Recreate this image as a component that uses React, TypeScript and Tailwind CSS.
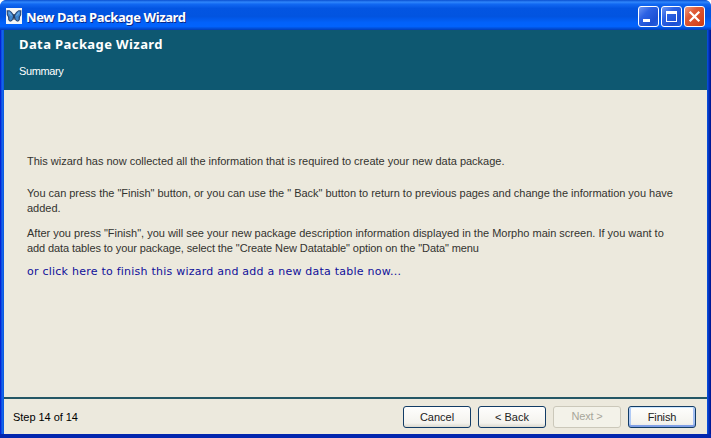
import React from 'react';

function Butterfly() {
  return (
    <svg width="16" height="16" viewBox="0 0 16 16" className="-mt-px block shrink-0">
      <rect width="16" height="16" fill="#f4f6f8" />
      <path d="M0.6 2.2L3.5 2.2Q6 3.6 7.6 6.4L8.4 6.4Q10 3.6 12.5 2.2L15.4 2.2L15.2 7L14 9L13.8 12L12 13.8L10 13L8 10L6 13L4 13.8L2.2 12L2 9L0.8 7Z" fill="#2b4876" />
      <path d="M1.8 3.2H3.6Q6 5 7.1 8L6.2 11.2L4.5 12.7L3.3 11.4L3.4 9L1.9 7Z" fill="#3f86cf" />
      <path d="M14.2 3.2H12.4Q10 5 8.9 8L9.8 11.2L11.5 12.7L12.7 11.4L12.6 9L14.1 7Z" fill="#3f86cf" />
      <path d="M2.8 4.5L5.6 7.7M13.2 4.5L10.4 7.7" stroke="#69a8e2" strokeWidth="1.2" />
      <path d="M8 6V12" stroke="#27344c" strokeWidth="1" />
    </svg>
  );
}

const captionBase =
  'flex h-[21px] w-[21px] items-center justify-center rounded-[3px] border border-white';

function TitleBar() {
  return (
    <div className="flex h-[30px] shrink-0 items-center rounded-tl-[6px] rounded-tr-[6px] bg-[linear-gradient(180deg,#0a4fd0_0%,#2f86fb_7%,#1168f2_14%,#0355e2_28%,#0254e0_55%,#0261fa_75%,#0263fd_88%,#0148cc_97%,#003dba_100%)] pt-[3px] pr-[6px] pl-[6px]">
      <Butterfly />
      <h1 className="ml-[4px] text-[13px] leading-[16px] font-bold tracking-[-0.41px] whitespace-nowrap text-white [font-family:'Noto_Sans','Liberation_Sans',sans-serif] [text-shadow:1px_1px_0_#0a2a88]">
        New Data Package Wizard
      </h1>
      <div className="ml-auto flex gap-[2px]">
        <button aria-label="Minimize" className={`${captionBase} bg-[linear-gradient(135deg,#6d96f3_0%,#2c62e4_35%,#1c50d4_75%,#2460df_100%)]`}>
          <svg width="19" height="19" viewBox="0 0 19 19"><rect x="4" y="12" width="7" height="3" fill="#fff" /></svg>
        </button>
        <button aria-label="Maximize" className={`${captionBase} bg-[linear-gradient(135deg,#6d96f3_0%,#2c62e4_35%,#1c50d4_75%,#2460df_100%)]`}>
          <svg width="19" height="19" viewBox="0 0 19 19"><path d="M4 4H15V15H4ZM5 7V14H14V7Z" fill="#fff" fillRule="evenodd" /></svg>
        </button>
        <button aria-label="Close" className={`${captionBase} bg-[linear-gradient(135deg,#ee9a80_0%,#df5a37_35%,#d64722_75%,#cb3a14_100%)]`}>
          <svg width="19" height="19" viewBox="0 0 19 19"><path d="M4.7 4.7L14.3 14.3M14.3 4.7L4.7 14.3" stroke="#fff" strokeWidth="2.2" /></svg>
        </button>
      </div>
    </div>
  );
}

const buttonBase =
  'flex h-[22px] w-[68px] items-center justify-center rounded-[3px] border pt-px text-[11px] leading-[13px] whitespace-nowrap';

export default function App() {
  return (
    <div className="h-[438px] w-[711px] overflow-hidden bg-white [font-family:'Liberation_Sans',Arial,sans-serif]">
      <div className="flex h-full flex-col rounded-t-[7px] bg-[#0831d9]">
        <TitleBar />
        <div className="flex min-h-0 flex-1 border-b-[4px] border-b-[#0226ae] bg-[linear-gradient(90deg,#0019cf_0,#0831d9_1px,#166aee_2px,#0855dd_4px,#0855dd_707px,#0841d0_708px,#001ea0_710px,#00138c_711px)] px-[4px]">
          <div className="flex w-[703px] flex-col bg-[#ece9dd]">
            <header className="h-[60px] shrink-0 bg-[#0e5871] pl-[15px] text-white">
              <h2 className="pt-[7px] text-[13px] leading-[15px] font-bold tracking-[0.4px] whitespace-nowrap [font-family:'Noto_Sans','Liberation_Sans',sans-serif]">Data Package Wizard</h2>
              <p className="mt-[12px] text-[11px] leading-[15px] tracking-[-0.4px]">Summary</p>
            </header>
            <main className="flex-1 pt-[64px] pl-[23px] text-[11px] leading-[15px] whitespace-nowrap text-[#33332f]">
              <p>This wizard has now collected all the information that is required to create your new data package.</p>
              <p className="mt-[17px]">
                <span className="tracking-[-0.017px]">You can press the "Finish" button, or you can use the " Back" button to return to previous pages and change the information you have</span>
                <br />
                added.
              </p>
              <p className="mt-[10px]">
                <span className="tracking-[-0.006px]">After you press "Finish", you will see your new package description information displayed in the Morpho main screen. If you want to</span>
                <br />
                <span className="tracking-[-0.09px]">add data tables to your package, select the "Create New Datatable" option on the "Data" menu</span>
              </p>
              <a className="mt-[8px] block text-[11px] tracking-[0.235px] text-[#10109a] [font-family:'DejaVu_Sans',sans-serif]">or click here to finish this wizard and add a new data table now...</a>
            </main>
            <footer className="flex h-[37px] shrink-0 items-center border-t-2 border-[#245765] pr-[11px] pl-[9px]">
              <span className="pt-[2px] text-[11px] leading-[13px] tracking-[-0.04px] text-black">Step 14 of 14</span>
              <div className="ml-auto flex gap-[7px]">
                <button className={`${buttonBase} border-[#123c66] bg-[linear-gradient(180deg,#fefefd,#f4f3ee_80%,#dcd9cf)] text-[#222]`}>Cancel</button>
                <button className={`${buttonBase} border-[#123c66] bg-[linear-gradient(180deg,#fefefd,#f4f3ee_80%,#dcd9cf)] text-[#222]`}>&lt; Back</button>
                <button className={`${buttonBase} border-[#cbc8ba] bg-[#f3f2e9] pb-[2px] tracking-[-0.15px] text-[#a7a69a]`}>Next &gt;</button>
                <button className={`${buttonBase} border-[#123c66] bg-[linear-gradient(180deg,#fefefd,#f4f3ee_80%,#e6e5e6)] tracking-[-0.15px] text-[#222] shadow-[inset_0_1px_0_#cee7ff,inset_0_-2px_0_#7f9fe6,inset_2px_0_0_#b0caf5,inset_-2px_0_0_#a4c0f3]`}>Finish</button>
              </div>
            </footer>
          </div>
        </div>
      </div>
    </div>
  );
}
